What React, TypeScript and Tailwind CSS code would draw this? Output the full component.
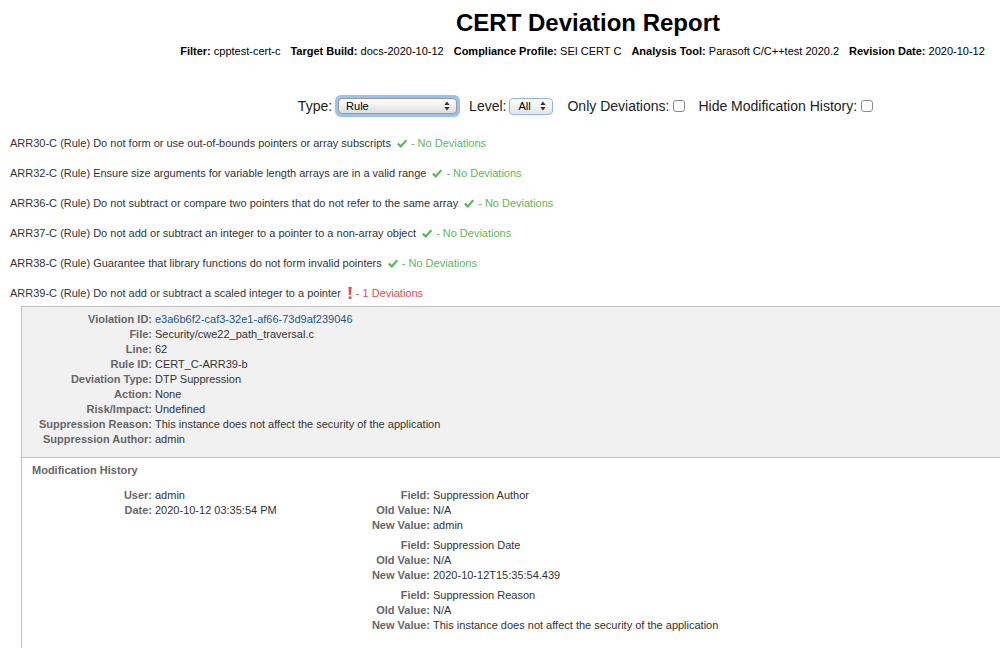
import React from "react";

const rules: { id: string; text: string; dev: number }[] = [
  { id: "ARR30-C", text: "Do not form or use out-of-bounds pointers or array subscripts", dev: 0 },
  { id: "ARR32-C", text: "Ensure size arguments for variable length arrays are in a valid range", dev: 0 },
  { id: "ARR36-C", text: "Do not subtract or compare two pointers that do not refer to the same array", dev: 0 },
  { id: "ARR37-C", text: "Do not add or subtract an integer to a pointer to a non-array object", dev: 0 },
  { id: "ARR38-C", text: "Guarantee that library functions do not form invalid pointers", dev: 0 },
  { id: "ARR39-C", text: "Do not add or subtract a scaled integer to a pointer", dev: 1 },
];

const details: [string, string, boolean?][] = [
  ["Violation ID:", "e3a6b6f2-caf3-32e1-af66-73d9af239046", true],
  ["File:", "Security/cwe22_path_traversal.c"],
  ["Line:", "62"],
  ["Rule ID:", "CERT_C-ARR39-b"],
  ["Deviation Type:", "DTP Suppression"],
  ["Action:", "None"],
  ["Risk/Impact:", "Undefined"],
  ["Suppression Reason:", "This instance does not affect the security of the application"],
  ["Suppression Author:", "admin"],
];

const changes: [string, string][][] = [
  [
    ["Field:", "Suppression Author"],
    ["Old Value:", "N/A"],
    ["New Value:", "admin"],
  ],
  [
    ["Field:", "Suppression Date"],
    ["Old Value:", "N/A"],
    ["New Value:", "2020-10-12T15:35:54.439"],
  ],
  [
    ["Field:", "Suppression Reason"],
    ["Old Value:", "N/A"],
    ["New Value:", "This instance does not affect the security of the application"],
  ],
];

function Check() {
  return (
    <svg width="10" height="9" viewBox="0 0 10 9" className="shrink-0">
      <path d="M0.8 4.6 L3.8 7.4 L9.3 1.2" fill="none" stroke="#5cb85c" strokeWidth="2.2" />
    </svg>
  );
}

function Bang() {
  return (
    <svg width="4" height="12" viewBox="0 0 4 12" className="shrink-0">
      <path d="M0.3 0 H3.7 L3 8 H1 Z" fill="#d9534f" />
      <rect x="0.6" y="9.4" width="2.8" height="2.6" fill="#d9534f" />
    </svg>
  );
}

function Arrows() {
  return (
    <svg width="6" height="10" viewBox="0 0 6 10" className="shrink-0">
      <path d="M3 0.5 L5.6 4 H0.4 Z" fill="#333" />
      <path d="M3 9.5 L5.6 6 H0.4 Z" fill="#333" />
    </svg>
  );
}

function Box() {
  return (
    <span className="inline-block w-[12px] h-[12px] rounded-[3px] border border-[#8a8a8a] bg-white ml-[4px]" />
  );
}

export default function App() {
  return (
    <div className="w-[1000px] h-[648px] overflow-hidden bg-white text-[#333] font-['Liberation_Sans',Arial,sans-serif]">
      <div className="w-[1176px]">
        <h1 className="pt-[9px] text-center text-[24px] leading-[28px] font-bold text-black">CERT Deviation Report</h1>
        <div className="mt-[8px] pr-[11px] flex justify-center gap-[10px] text-[11px] leading-[13px] text-black">
          <span><b>Filter:</b> cpptest-cert-c</span>
          <span><b>Target Build:</b> docs-2020-10-12</span>
          <span><b>Compliance Profile:</b> SEI CERT C</span>
          <span><b>Analysis Tool:</b> Parasoft C/C++test 2020.2</span>
          <span><b>Revision Date:</b> 2020-10-12</span>
        </div>
        <div className="mt-[37px] pr-[5px] h-[22px] flex justify-center items-center text-[14px] text-[#222]">
          <span>Type:</span>
          <span className="ml-[3px] rounded-[6px] p-[3px] bg-[#9cc0f0]">
            <span className="flex items-center w-[119px] h-[16px] rounded-[4px] border border-[#9a9a9a] bg-gradient-to-b from-white to-[#dedede] pl-[7px] pr-[6px] text-[11px] text-black">
              <span className="flex-1">Rule</span>
              <Arrows />
            </span>
          </span>
          <span className="ml-[9px]">Level:</span>
          <span className="ml-[3px] flex items-center w-[44px] h-[17px] rounded-[4px] border border-[#8fb6e8] bg-gradient-to-b from-white to-[#e4e4e4] pl-[8px] pr-[6px] text-[11px] text-black">
            <span className="flex-1">All</span>
            <Arrows />
          </span>
          <span className="ml-[14px]">Only Deviations:</span>
          <Box />
          <span className="ml-[13px]">Hide Modification History:</span>
          <Box />
        </div>
        <div className="mt-[11px] pl-[10px] text-[11px] leading-[13px] text-[#333]">
          {rules.map((r, i) => (
            <div key={r.id} className={`flex items-center ${i === rules.length - 1 ? "h-[28px] pt-[2px]" : "h-[30px]"}`}>
              <span>
                {r.id} (Rule) {r.text}
              </span>
              {r.dev === 0 ? (
                <>
                  <span className="ml-[6px] flex items-center"><Check /></span>
                  <span className="ml-[4px] text-[#5cb85c]">- No Deviations</span>
                </>
              ) : (
                <>
                  <span className="ml-[7px] flex items-center"><Bang /></span>
                  <span className="ml-[4px] text-[#d9534f]">- {r.dev} Deviations</span>
                </>
              )}
            </div>
          ))}
        </div>
        <div className="ml-[21px] h-[400px] border-l border-t border-[#c2c2c2] text-[11px] leading-[15px]">
          <div className="bg-[#f1f1f1] border-b border-[#c2c2c2] pt-[5px] pb-[10px]">
            <div className="grid grid-cols-[130px_1fr] gap-x-[3px]">
              {details.map(([k, v, link]) => (
                <React.Fragment key={k}>
                  <span className="text-right font-bold text-[#666]">{k}</span>
                  <span className={link ? "text-[#22578a]" : "text-[#333]"}>{v}</span>
                </React.Fragment>
              ))}
            </div>
          </div>
          <div className="pt-[5px]">
            <div className="pl-[10px] font-bold text-[#666]">Modification History</div>
            <div className="mt-[10px] flex">
              <div className="w-[327px] shrink-0">
                <div className="grid grid-cols-[130px_1fr] gap-x-[3px]">
                  <span className="text-right font-bold text-[#666]">User:</span>
                  <span>admin</span>
                  <span className="text-right font-bold text-[#666]">Date:</span>
                  <span>2020-10-12 03:35:54 PM</span>
                </div>
              </div>
              <div className="flex flex-col gap-[5px]">
                {changes.map((g, gi) => (
                  <div key={gi} className="grid grid-cols-[81px_1fr] gap-x-[3px]">
                    {g.map(([k, v]) => (
                      <React.Fragment key={k}>
                        <span className="text-right font-bold text-[#666]">{k}</span>
                        <span>{v}</span>
                      </React.Fragment>
                    ))}
                  </div>
                ))}
              </div>
            </div>
          </div>
        </div>
      </div>
    </div>
  );
}
